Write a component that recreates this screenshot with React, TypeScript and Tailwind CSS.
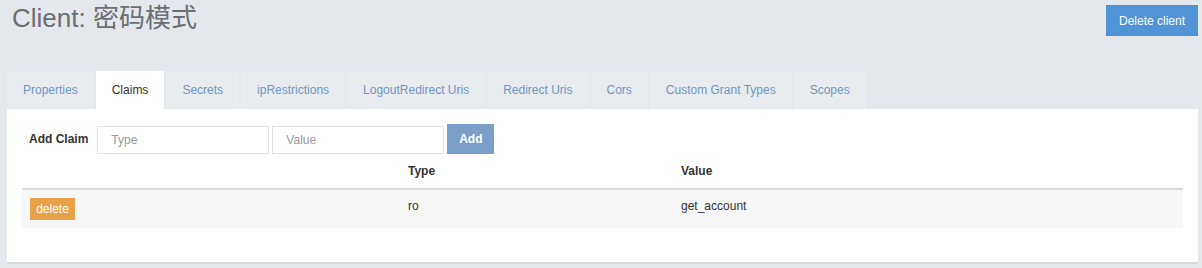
const tabs = [
  "Properties",
  "Claims",
  "Secrets",
  "ipRestrictions",
  "LogoutRedirect Uris",
  "Redirect Uris",
  "Cors",
  "Custom Grant Types",
  "Scopes",
];

const claims = [{ type: "ro", value: "get_account" }];

const App = () => {
  return (
    <div
      className="min-h-[268px] bg-[#e4e7eb] pl-[7px] pr-[4px] text-[12px] text-[#333]"
      style={{ fontFamily: '"Liberation Sans", Arial, "Noto Sans CJK SC", sans-serif' }}
    >
      {/* Header */}
      <div className="flex h-[71px] items-start justify-between">
        <h1 className="pl-[5px] pt-[3px] text-[26px] font-normal leading-[30px] text-[#6b6e73]">
          Client: 密码模式
        </h1>
        <button className="mt-[5px] h-[31px] w-[92px] bg-[#5094d6] text-[12px] text-white">
          Delete client
        </button>
      </div>

      {/* Tabs */}
      <div className="flex h-[38px] gap-[2px]">
        {tabs.map((t) => {
          const active = t === "Claims";
          return (
            <div
              key={t}
              className={
                active
                  ? "flex items-center bg-white px-[16px] text-[#333]"
                  : "flex items-center bg-[#e9ecef] px-[16px] text-[#6f95c3]"
              }
            >
              {t}
            </div>
          );
        })}
      </div>

      {/* Panel */}
      <div className="bg-white px-[15px] pt-[15px] pb-[34px] shadow-[0_2px_0_#d5d8dc]">
        <div className="flex h-[30px] items-end">
          <span className="mb-[6px] ml-[7px] mr-[9px] font-bold">Add Claim</span>
          <input
            placeholder="Type"
            className="h-[28px] w-[172px] border border-[#e0e0e0] px-[13px] text-[12px] outline-none placeholder:text-[#999]"
          />
          <input
            placeholder="Value"
            className="ml-[3px] h-[28px] w-[172px] border border-[#e0e0e0] px-[13px] text-[12px] outline-none placeholder:text-[#999]"
          />
          <button className="ml-[3px] h-[30px] w-[47px] bg-[#7aa0c9] font-bold text-white">Add</button>
        </div>

        <div className="grid h-[36px] grid-cols-[378px_273px_1fr] items-center border-b-2 border-[#d9d9d9] font-bold">
          <div />
          <div className="px-[8px]">Type</div>
          <div className="px-[8px]">Value</div>
        </div>
        {claims.map((c) => (
          <div key={c.type} className="grid h-[38px] grid-cols-[378px_273px_1fr] items-start bg-[#f7f7f7] pt-[8px]">
            <div className="px-[8px]">
              <button className="h-[22px] w-[45px] bg-[#e8a249] text-white">delete</button>
            </div>
            <div className="px-[8px] leading-[17px]">{c.type}</div>
            <div className="px-[8px] leading-[17px]">{c.value}</div>
          </div>
        ))}
      </div>
    </div>
  );
};

export default App;
